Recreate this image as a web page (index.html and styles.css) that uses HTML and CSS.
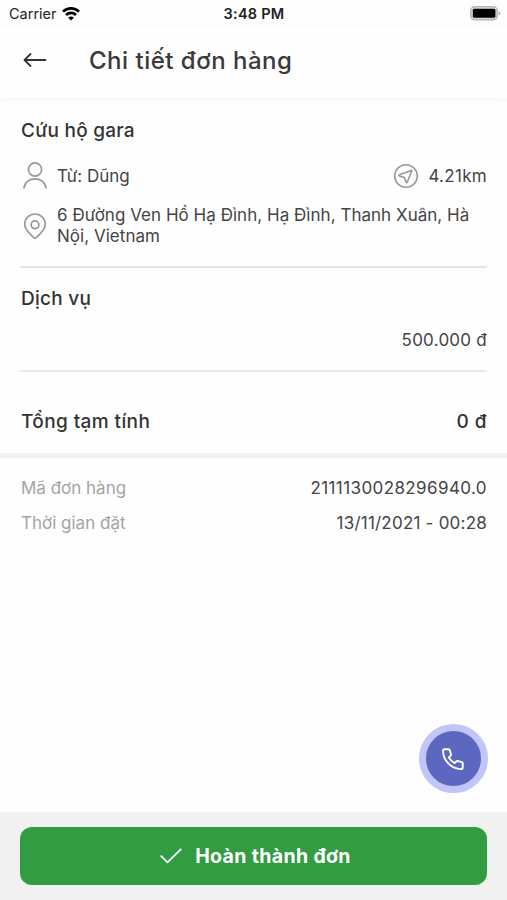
FILE: index.html
```html
<!DOCTYPE html>
<html lang="vi">
<head>
<meta charset="UTF-8">
<meta name="viewport" content="width=device-width, initial-scale=1.0">
<title>Chi tiết đơn hàng</title>
<link rel="stylesheet" href="styles.css">
</head>
<body>
<div class="screen">
  <div class="status-bar">
    <div class="carrier">
      <span>Carrier</span>
      <svg class="wifi" width="18" height="14" viewBox="0 0 18 14" fill="none" stroke="#000" stroke-width="2.6">
        <path d="M1 4.700C5.500 .2 12.500 .2 17 4.700"/>
        <path d="M4 8C6.800 5.200 11.200 5.200 14 8"/>
        <path d="M9 13.500L6.200 10.700C7.800 9.100 10.200 9.100 11.800 10.700Z" fill="#000" stroke="none"/>
      </svg>
    </div>
    <span class="clock">3:48 PM</span>
    <svg class="battery" width="31" height="15" viewBox="0 0 31 15">
      <rect x=".8" y=".8" width="26.400" height="13" rx="4" fill="#ddd" stroke="#b5b5b5" stroke-width="1.500"/>
      <rect x="2.800" y="2.800" width="22.600" height="9" rx="1.500" fill="#000"/>
      <path d="M28.600 5.200C30.800 5.600 30.800 8.800 28.600 9.200Z" fill="#aaa"/>
    </svg>
  </div>

  <header>
    <svg width="24" height="16" viewBox="0 0 24 16" fill="none" stroke="#333" stroke-width="1.800" stroke-linecap="round" stroke-linejoin="round">
      <path d="M22.500 8H1.500M7.500 2L1.500 8L7.500 14"/>
    </svg>
    <h1>Chi tiết đơn hàng</h1>
  </header>

  <main>
    <section class="rescue">
      <h2>Cứu hộ gara</h2>
      <div class="row person">
        <svg class="icon" width="28" height="28" viewBox="0 0 28 28" fill="none" stroke="#999" stroke-width="1.700" stroke-linecap="round">
          <circle cx="14" cy="7.500" r="6.600"/>
          <path d="M3 26C4.300 13.700 23.700 13.700 25 26"/>
        </svg>
        <span class="name">Từ: Dũng</span>
        <svg class="compass" width="26" height="26" viewBox="0 0 26 26" fill="none" stroke="#999" stroke-width="1.600" stroke-linejoin="round">
          <circle cx="13" cy="13" r="11.300"/>
          <path d="M18.900 7.200L6.400 11.800Q5.500 12.300 6.400 12.900L11.300 14.600L13.200 19.300Q13.700 20.100 14.300 19.200Z"/>
        </svg>
        <span class="distance">4.21km</span>
      </div>
      <div class="row address">
        <svg class="icon" width="28" height="28" viewBox="0 0 28 28" fill="none" stroke="#999" stroke-width="1.700" stroke-linejoin="round">
          <path d="M14 26.200Q13 26.200 12 25C8 20.700 3.700 17.700 3.700 12.300A10.300 10.300 0 0 1 24.300 12.300C24.300 17.700 20 20.700 16 25Q15 26.200 14 26.200Z"/>
          <circle cx="14" cy="12.800" r="3.900"/>
        </svg>
        <p>6 Đường Ven Hồ Hạ Đình, Hạ Đình, Thanh Xuân, Hà Nội, Vietnam</p>
      </div>
    </section>

    <section class="service">
      <h2>Dịch vụ</h2>
      <p class="price">500.000 đ</p>
    </section>

    <section class="total">
      <h2>Tổng tạm tính</h2>
      <span class="amount">0 đ</span>
    </section>

    <section class="info">
      <div class="info-row">
        <span class="label">Mã đơn hàng</span>
        <span class="code">2111130028296940.0</span>
      </div>
      <div class="info-row">
        <span class="label">Thời gian đặt</span>
        <span class="date">13/11/2021 - 00:28</span>
      </div>
    </section>
  </main>

  <button class="call" aria-label="Gọi">
    <svg width="24" height="24" viewBox="0 0 24 24" fill="none" stroke="#fff" stroke-width="1.900" stroke-linejoin="round">
      <path d="M3.200 2.300H7.600Q8.500 2.300 8.800 3.200L10 7.300Q10.200 8.200 9.500 8.900L7.900 10.300C9 12.700 11.300 15 13.700 16.100L15.200 14.500Q15.900 13.700 16.800 14L20.900 15.200Q21.700 15.500 21.700 16.400V20.500Q21.700 22.100 20.100 22.100C10.500 22 2.100 13.700 2 3.800Q2 2.400 3.200 2.300Z"/>
    </svg>
  </button>

  <footer>
    <button class="done">
      <svg width="22" height="16" viewBox="0 0 22 16" fill="none" stroke="#fff" stroke-width="1.800" stroke-linecap="round" stroke-linejoin="round">
        <path d="M1.200 8.200L7.500 14.300L20.700 1.300"/>
      </svg>
      <span>Hoàn thành đơn</span>
    </button>
  </footer>
</div>
</body>
</html>
```
FILE: styles.css
```css
* {box-sizing: border-box;}
body {margin: 0; font-family: Inter, "Noto Sans", sans-serif; font-size: 17px; color: #444; background: #fefefe;}
h1, h2, p {margin: 0;}
h2 {font-size: 19px; line-height: 24px; font-weight: 500; color: #333; letter-spacing: 0.25px;}
button {border: none; padding: 0; font-family: inherit; cursor: pointer;}
svg {display: block; flex-shrink: 0;}

.screen {
  position: relative;
  display: flex;
  flex-direction: column;
  height: 900px;
}

.status-bar {
  display: grid;
  grid-template-columns: 1fr auto 1fr;
  align-items: center;
  height: 27px;
  padding: 0 6px 0 9px;
  font-size: 14.5px;
  color: #222;
}
.carrier {display: flex; align-items: center; gap: 5px;}
.clock {font-weight: 600; letter-spacing: 0.25px; margin-right: 2px;}
.battery {justify-self: end;}

header {
  display: flex;
  align-items: center;
  height: 71px;
  padding: 0 23px 5px;
  gap: 42px;
  box-shadow: 0 1px 8px rgba(0, 0, 0, 0.05);
}
h1 {font-size: 24px; font-weight: 500; color: #3a3a3a; letter-spacing: 0.5px;}

main {flex: 1;}

.rescue {
  height: 170px;
  margin: 0 20px;
  padding: 20px 0 0 1px;
  border-bottom: 2px solid #e5e5e5;
}
.rescue h2 {line-height: 25px;}
.row {display: flex; align-items: center;}
.icon {margin-right: 8px;}
.person {height: 28px; margin-top: 19px;}
.compass {margin-left: auto; margin-right: 9px;}
.distance {letter-spacing: 0.3px;}
.address {margin-top: 15px;}
.address p {line-height: 21px; letter-spacing: 0.03px;}

.service {
  height: 104px;
  margin: 0 20px;
  padding: 19px 0 0 1px;
  border-bottom: 2px solid #e8eaea;
}
.price {margin-top: 18px; line-height: 22px; text-align: right; letter-spacing: 0.25px;}

.total {
  display: flex;
  justify-content: space-between;
  height: 86px;
  padding: 38px 20px 0 21px;
  border-bottom: 5px solid #f1f1f1;
}
.total h2 {letter-spacing: 0.4px;}
.amount {font-size: 19px; line-height: 24px; font-weight: 500; color: #333; letter-spacing: 0.5px;}

.info {padding: 19px 20px 0 21px;}
.info-row {display: flex; justify-content: space-between; line-height: 23px; margin-bottom: 12px;}
.label {color: #a4a4a4;}
.code {letter-spacing: 0.4px;}
.date {letter-spacing: 0.22px;}

.call {
  position: absolute;
  right: 19px;
  bottom: 107px;
  display: flex;
  align-items: center;
  justify-content: center;
  width: 69px;
  height: 69px;
  padding-right: 1px;
  border: 7.500px solid #c0c6f8;
  border-radius: 50%;
  background: #5c68bf;
}

footer {height: 88px; padding: 15px 20px; background: #f1f1f1;}
.done {
  display: flex;
  align-items: center;
  justify-content: center;
  gap: 13px;
  width: 100%;
  height: 58px;
  padding-left: 4px;
  border-radius: 12px;
  background: #329c43;
  color: #fff;
  font-size: 19.5px;
  font-weight: 700;
  letter-spacing: 0.35px;
}
```
